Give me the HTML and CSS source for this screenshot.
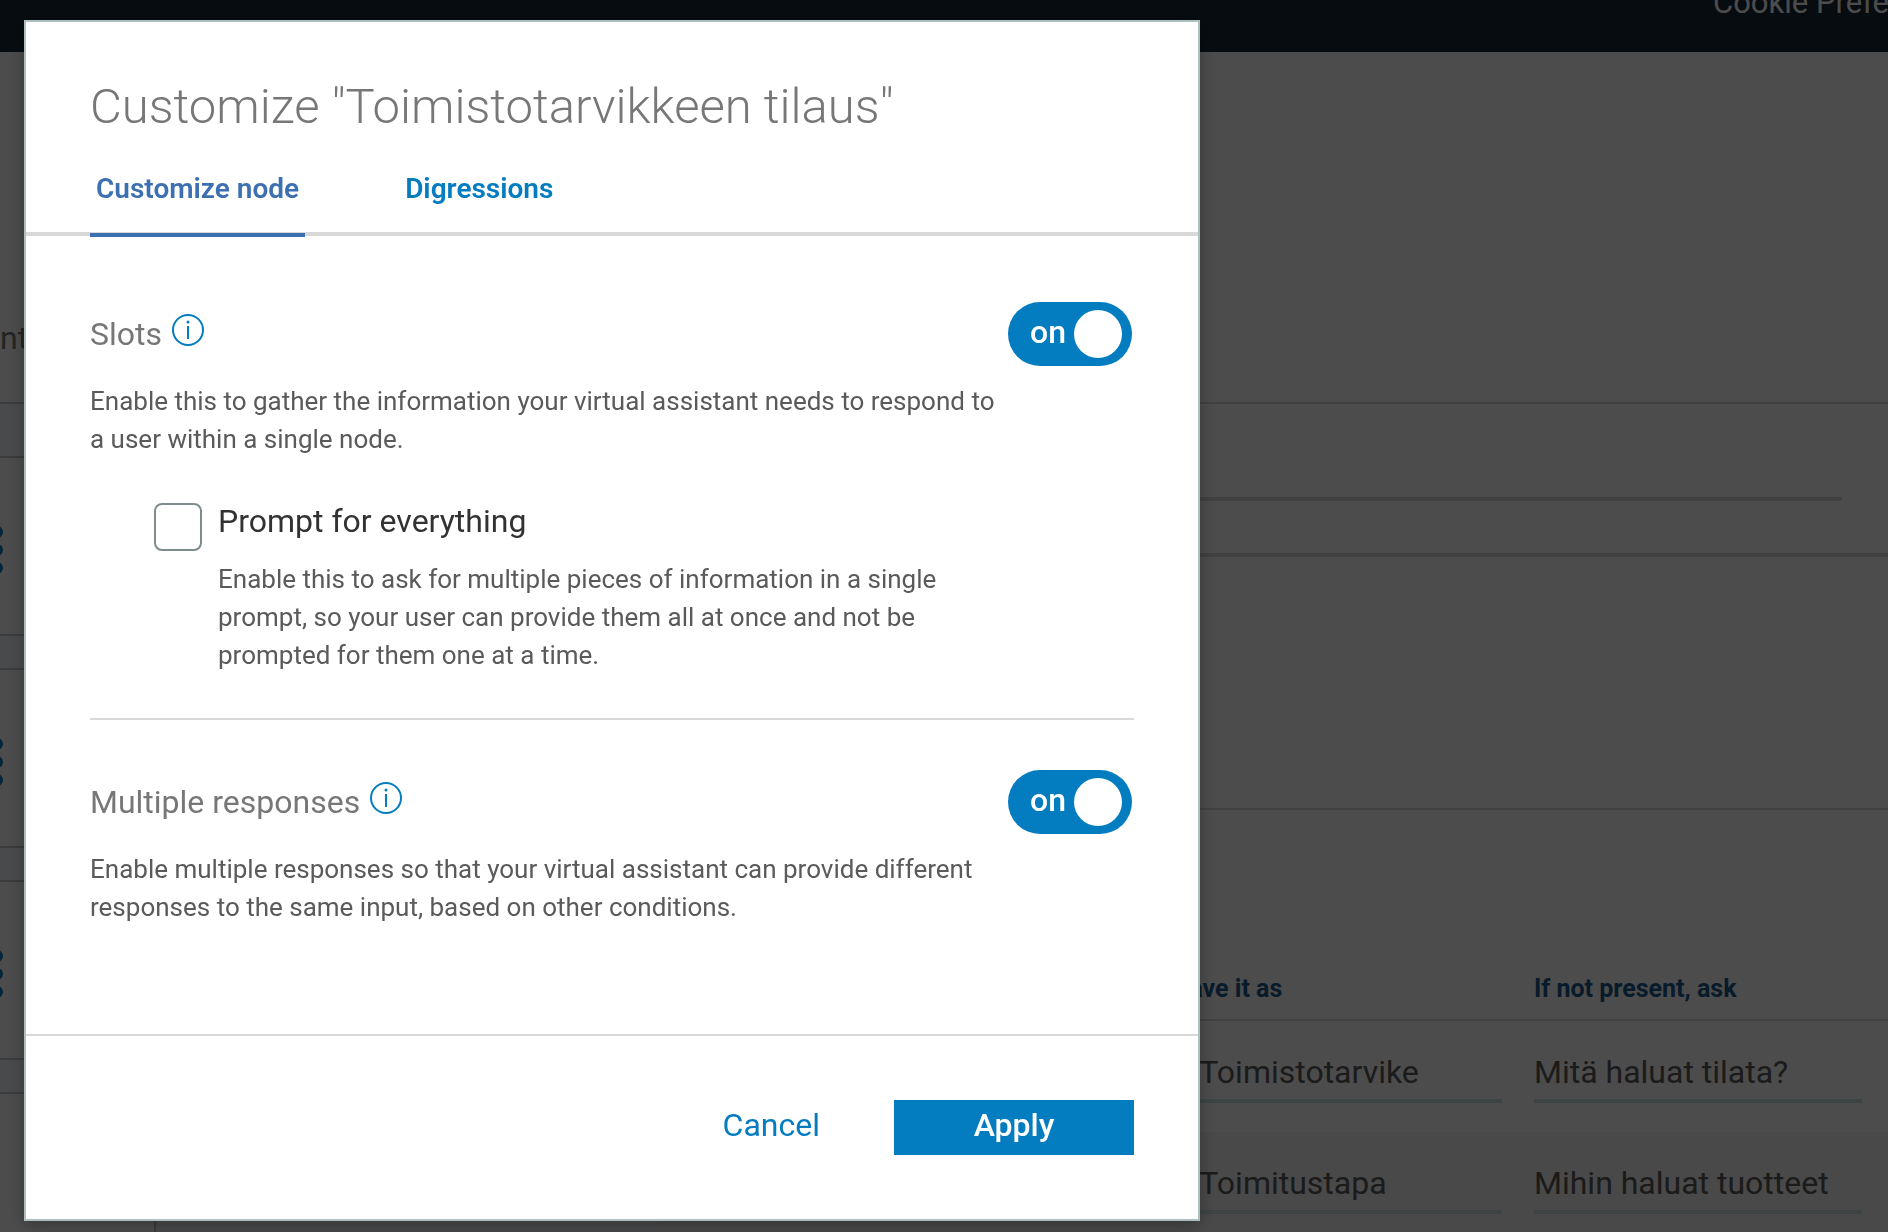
FILE: index.html
```html
<!DOCTYPE html>
<html lang="en">
<head>
<meta charset="utf-8">
<title>Customize node</title>
<link rel="stylesheet" href="styles.css">
</head>
<body>
<div class="app">
  <header class="topbar"><a class="topbar-link" href="#cookies">Cookie Preferences</a></header>
  <div class="workspace">
    <aside class="tree">
      <div class="tree-head">ent</div>
      <div class="tree-band tree-band-first"></div>
      <div class="tree-node"><button class="kebab" aria-label="Node menu"><i></i><i></i><i></i></button></div>
      <div class="tree-band"></div>
      <div class="tree-node"><button class="kebab" aria-label="Node menu"><i></i><i></i><i></i></button></div>
      <div class="tree-band"></div>
      <div class="tree-node"><button class="kebab" aria-label="Node menu"><i></i><i></i><i></i></button></div>
      <div class="tree-band"></div>
      <div class="tree-children"><div class="tree-child"></div></div>
    </aside>
    <section class="editor">
      <div class="editor-top"></div>
      <div class="editor-name"><input class="name-input" aria-label="Node name"></div>
      <div class="editor-condition"></div>
      <table class="slots">
        <colgroup><col class="col-index"><col class="col-check"><col class="col-save"><col class="col-ask"></colgroup>
        <thead><tr><th></th><th></th><th>Save it as</th><th>If not present, ask</th></tr></thead>
        <tbody>
          <tr><td></td><td></td><td><input aria-label="Save it as" value="$ Toimistotarvike"></td><td><input aria-label="If not present, ask" value="Mitä haluat tilata?"></td></tr>
          <tr><td></td><td></td><td><input aria-label="Save it as" value="$ Toimitustapa"></td><td><input aria-label="If not present, ask" value="Mihin haluat tuotteet"></td></tr>
        </tbody>
      </table>
    </section>
  </div>
</div>

<div class="scrim">
  <div class="dialog" role="dialog" aria-modal="true" aria-labelledby="dialog-title">
    <header class="dialog-head">
      <h1 id="dialog-title" class="dialog-title">Customize "Toimistotarvikkeen tilaus"</h1>
      <div class="tabs" role="tablist">
        <button class="tab tab-active" role="tab" aria-selected="true">Customize node</button>
        <button class="tab" role="tab" aria-selected="false">Digressions</button>
      </div>
    </header>
    <div class="dialog-body">
      <section class="option">
        <div class="option-head">
          <h2 class="option-title">Slots
            <svg class="info" viewBox="0 0 32 32" aria-hidden="true"><circle cx="16" cy="16" r="15"/><path d="M16 12v13"/><circle class="info-dot" cx="16" cy="8" r="1.5"/></svg>
          </h2>
          <label class="toggle"><span>on</span><input type="checkbox" role="switch" aria-label="Slots" checked></label>
        </div>
        <p class="option-text">Enable this to gather the information your virtual assistant needs to respond to a user within a single node.</p>
        <div class="suboption">
          <input class="checkbox" type="checkbox" id="prompt-all">
          <div>
            <label class="suboption-label" for="prompt-all">Prompt for everything</label>
            <p class="suboption-text">Enable this to ask for multiple pieces of information in a single prompt, so your user can provide them all at once and not be prompted for them one at a time.</p>
          </div>
        </div>
      </section>
      <section class="option">
        <div class="option-head">
          <h2 class="option-title">Multiple responses
            <svg class="info" viewBox="0 0 32 32" aria-hidden="true"><circle cx="16" cy="16" r="15"/><path d="M16 12v13"/><circle class="info-dot" cx="16" cy="8" r="1.5"/></svg>
          </h2>
          <label class="toggle"><span>on</span><input type="checkbox" role="switch" aria-label="Multiple responses" checked></label>
        </div>
        <p class="option-text">Enable multiple responses so that your virtual assistant can provide different responses to the same input, based on other conditions.</p>
      </section>
    </div>
    <footer class="dialog-foot">
      <button class="btn btn-link">Cancel</button>
      <button class="btn btn-primary">Apply</button>
    </footer>
  </div>
</div>
</body>
</html>
```
FILE: styles.css
```css
*{box-sizing:border-box}
body{margin:0;height:100vh;overflow:hidden;font-family:Roboto,"Liberation Sans",sans-serif;font-size:32px;background:#fff;color:#5a5a5a}
h1,h2,p{margin:0;font-weight:400}
button,input{font:inherit;margin:0;padding:0;border:0;background:none;color:inherit}

/* Page behind the dialog */
.app{height:100vh;overflow:hidden;display:flex;flex-direction:column}
.topbar{flex:none;height:64px;margin-top:-12px;background:#152935;display:flex;justify-content:flex-end;align-items:flex-start}
.topbar-link{flex:0 0 175px;overflow:hidden;white-space:nowrap;color:#fff;text-decoration:none;font-size:31px;line-height:30px;font-weight:400}
.workspace{flex:1;min-height:0;display:grid;grid-template-columns:674px 1fr;margin-left:-14px}
.tree{display:flex;flex-direction:column;min-height:0;overflow:hidden}
.tree-head{flex:none;height:350px;padding-top:266px;text-indent:-3px;line-height:40px;color:#777}
.tree-band{flex:none;height:36px;background:#f3f9ff;border:solid #c7c7c7;border-width:2px 0}
.tree-band-first{height:56px}
.tree-node{flex:none;height:176px;display:flex;align-items:center;padding:8px 0 0 5px}
.kebab{display:flex;flex-direction:column;gap:6px}
.kebab i{width:12px;height:12px;border-radius:50%;background:#047cc0}
.tree-children{flex:1;padding:60px 0 0 168px}
.tree-child{height:100%;background:#f0f5f8;border-left:2px solid #c7c7c7}

.editor{min-width:0;overflow:hidden}
.editor-top{height:352px;border-bottom:2px solid #d8d8d8}
.editor-name{height:153px;padding:41px 46px 0 64px;border-bottom:4px solid #d8d8d8}
.name-input{display:block;width:100%;height:56px;border-bottom:4px solid #d8d8d8}
.editor-condition{height:253px;border-bottom:2px solid #d8d8d8}
.slots{width:100%;table-layout:fixed;border-collapse:collapse}
.col-index{width:154px}
.col-check,.col-save{width:360px}
.slots th{height:210px;padding:0 0 14px;vertical-align:bottom;text-align:left;font-size:25px;line-height:32px;font-weight:700;color:#1a5a8c;border-bottom:2px solid #d8d8d8}
.slots td{height:112px;padding:24px 32px 0 0;vertical-align:top}
.slots td:last-child{padding-right:26px}
.slots tbody tr:nth-child(even){background:#f3f3f3}
.slots input{display:block;width:100%;height:58px;border-bottom:4px solid #cfe2e1}

/* Dialog */
.scrim{position:fixed;inset:0;padding:20px 24px;background:rgba(0,0,0,.7)}
.dialog{max-width:1176px;background:#fff;border:2px solid #aebfbf;box-shadow:0 4px 16px rgba(0,0,0,.3)}
.dialog-head{padding:55px 64px 0;border-bottom:4px solid #d8d8d8}
.dialog-title{font-size:49px;line-height:60px;font-weight:300;color:#777}
.tabs{display:flex;gap:94px;margin:36px 0 -5px}
.tab{padding:0 6px 28px;font-size:28px;line-height:32px;font-weight:600;color:#047cc0;border-bottom:4px solid transparent}
.tab-active{color:#3d70b2;border-color:#3d70b2}
.dialog-body{padding:66px 64px 108px}
.option + .option{margin-top:44px;padding-top:50px;border-top:2px solid #d8d8d8}
.option-head{display:flex;justify-content:space-between;align-items:center;padding-right:2px}
.option-title{display:flex;gap:10px;font-size:32px;line-height:40px;color:#777}
.info{width:32px;height:32px;fill:none;stroke:#047cc0;stroke-width:2}
.info-dot{fill:#047cc0;stroke:none}
.toggle{display:flex;justify-content:space-between;align-items:center;width:124px;height:64px;padding:0 10px 0 22px;border-radius:32px;background:#047cc0;color:#fff;font-weight:500}
.toggle span{padding-bottom:4px}
.toggle input{appearance:none;width:48px;height:48px;border-radius:50%;background:#fff}
.option-text,.suboption-text{font-size:26px;line-height:38px;color:#5a5a5a}
.option-text{max-width:912px;margin-top:16px}
.suboption{display:flex;gap:16px;margin-top:43px;padding-left:64px}
.checkbox{appearance:none;flex:none;width:48px;height:48px;margin-top:2px;border:2px solid #7f8c8d;border-radius:8px;background:#fff}
.suboption-label{display:block;line-height:40px;color:#323232}
.suboption-text{max-width:736px;margin-top:19px}
.dialog-foot{display:flex;justify-content:flex-end;padding:64px;border-top:2px solid #d8d8d8}
.btn{height:55px;padding-bottom:5px;line-height:40px}
.btn-link{padding-right:74px;color:#047cc0}
.btn-primary{width:240px;background:#047cc0;color:#fff;font-weight:500}
```
